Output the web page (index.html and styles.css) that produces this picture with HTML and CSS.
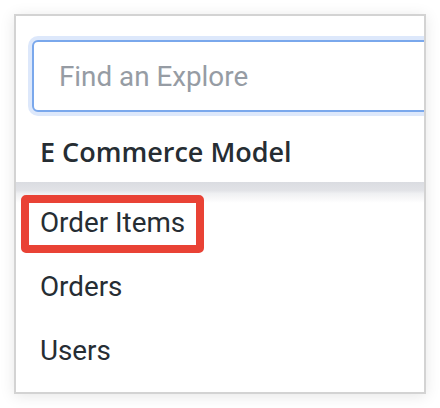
FILE: index.html
```html
<!DOCTYPE html>
<html>
<head>
<meta charset="utf-8">
<link rel="stylesheet" href="styles.css">
</head>
<body>
<div class="panel">
  <div class="search">
    <input class="search-input" type="text" placeholder="Find an Explore">
  </div>
  <div class="group-header">E Commerce Model</div>
  <div class="header-shadow"></div>
  <ul class="explore-list">
    <li class="explore-item"><span class="label highlighted">Order Items</span></li>
    <li class="explore-item"><span class="label">Orders</span></li>
    <li class="explore-item"><span class="label">Users</span></li>
  </ul>
</div>
</body>
</html>
```

FILE: styles.css
```css
* { box-sizing: border-box; }
html, body {
  margin: 0;
  padding: 0;
  background: #ffffff;
}
body {
  padding: 14px;
  font-family: Roboto, "Liberation Sans", sans-serif;
}
.panel {
  width: 412px;
  height: 380px;
  border: 2px solid #d3d3d3;
  background: #ffffff;
  box-shadow: 0 2px 14px rgba(0, 0, 0, 0.10);
  overflow: hidden;
  position: relative;
}
.search {
  padding: 24px 0 0 16px;
  width: 600px;
}
.search-input {
  display: block;
  width: 500px;
  height: 72px;
  border: 2px solid #7aa8ec;
  border-radius: 6px;
  box-shadow: 0 0 0 4px #dde8fb;
  outline: none;
  padding: 0 0 0 25px;
  font-family: Roboto, sans-serif;
  font-size: 27.8px;
  color: #262d33;
  background: #fff;
}
.search-input::placeholder {
  color: #969ca4;
}
.group-header {
  height: 70px;
  display: flex;
  align-items: center;
  padding: 8px 0 0 24px;
  font-family: "Open Sans", Roboto, sans-serif;
  font-weight: 600;
  font-size: 27px;
  color: #262d33;
}
.header-shadow {
  height: 21px;
  background: linear-gradient(#dadce1 0%, #e2e3e7 40%, #eff0f2 55%, #f8f8f9 80%, #ffffff 100%);
  margin-bottom: -13px;
}
.explore-list {
  list-style: none;
  margin: 0;
  padding: 0;
}
.explore-item {
  height: 64px;
  display: flex;
  align-items: center;
  padding-left: 24px;
  font-size: 27.8px;
  color: #262d33;
}
.label {
  position: relative;
}
.highlighted::after {
  content: "";
  position: absolute;
  left: -19px;
  right: -19px;
  top: -11px;
  bottom: -14px;
  border: 8px solid #e94235;
  border-radius: 5px;
}
```
